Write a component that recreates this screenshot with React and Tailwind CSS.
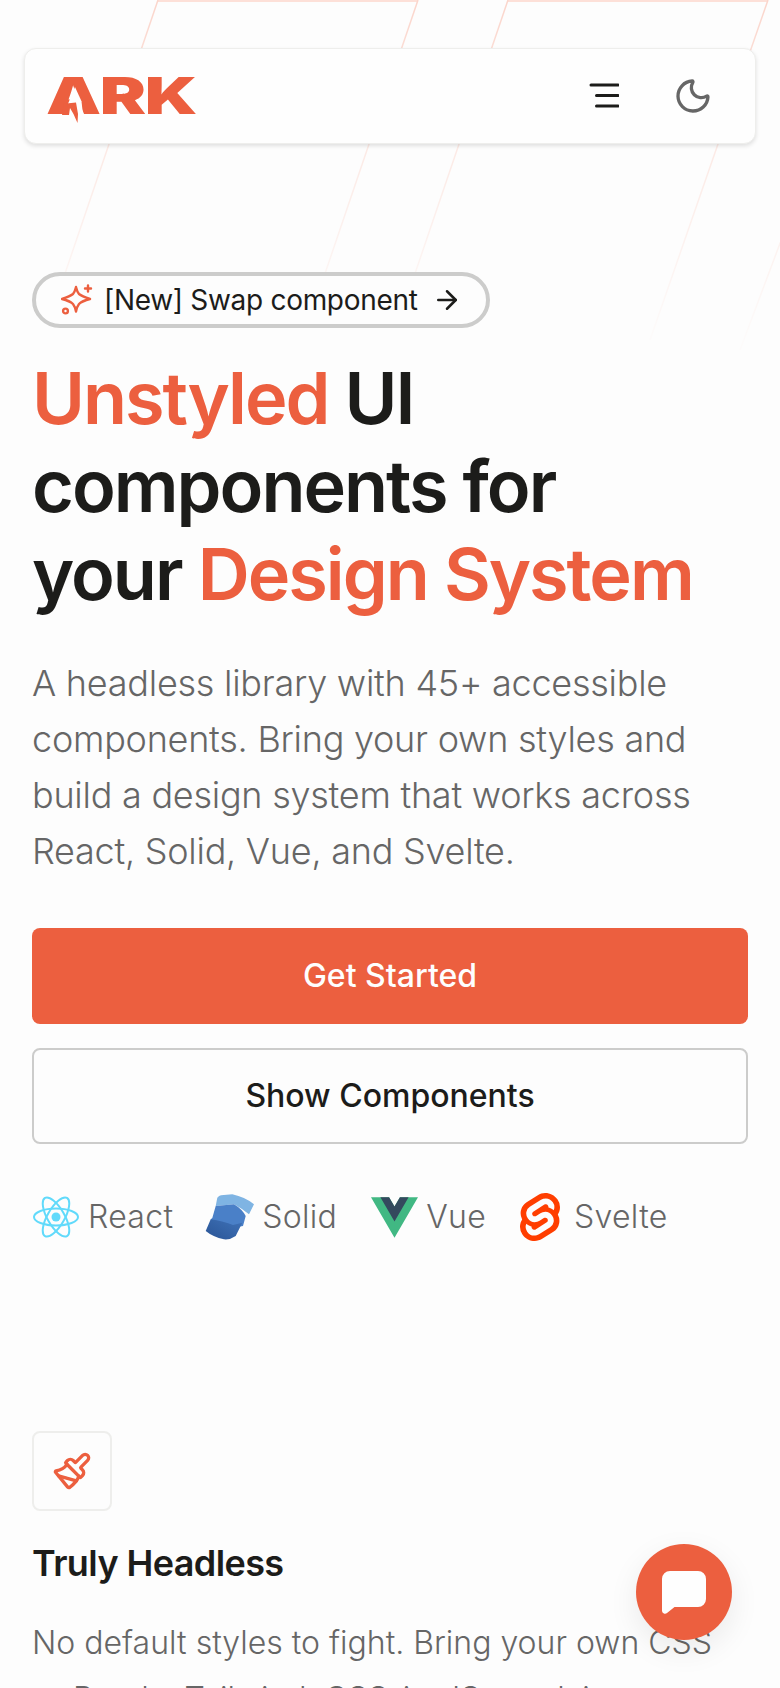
import { ArrowRight, Moon, Paintbrush } from "lucide-react";
import { SiSvelte } from "react-icons/si";

const font = { fontFamily: '"Inter", sans-serif' };

function BackgroundLines() {
  const lines = [
    [158, 0, 56, 300],
    [418, 0, 316, 300],
    [508, 0, 406, 300],
    [768, 0, 650, 340],
    [800, 190, 740, 350],
  ];
  return (
    <svg className="absolute top-0 left-0" width="780" height="360" viewBox="0 0 780 360" fill="none">
      <defs>
        <linearGradient id="fade" gradientUnits="userSpaceOnUse" x1="0" y1="0" x2="0" y2="340">
          <stop offset="0" stopColor="#fbd5cb" />
          <stop offset="0.4" stopColor="#fbd5cb" stopOpacity="0.5" />
          <stop offset="1" stopColor="#fbd5cb" stopOpacity="0.05" />
        </linearGradient>
      </defs>
      <rect x="158" y="0" width="260" height="2" fill="#fde0d8" />
      <rect x="508" y="0" width="260" height="2" fill="#fde0d8" />
      {lines.map(([x1, y1, x2, y2]) => (
        <path key={x1} d={`M${x1} ${y1}L${x2} ${y2}`} stroke="url(#fade)" strokeWidth="1.5" />
      ))}
    </svg>
  );
}

function Logo() {
  return (
    <div className="relative h-[46px] w-[146px]">
      <span className="absolute top-[-10px] left-0 origin-left scale-x-[1.36] text-[51px] leading-[60px] font-black tracking-[-1px] text-[#ec5f3f]">
        ARK
      </span>
      {/* bolt cut into the A */}
      <svg className="absolute top-[1px] left-[2px]" width="60" height="46" viewBox="0 0 60 46">
        <path d="M27 10 L33.500 24.300 L35 38 L20 38 L20 26.700 Z" fill="#fefefe" />
        <path d="M16 26.700 L28 25.500 L30 37 L29.500 46 L25.500 37 L22 31 L21 38 L14 38 Z" fill="#ec5f3f" />
      </svg>
    </div>
  );
}

function MenuIcon() {
  return (
    <svg width="30" height="26" viewBox="0 0 30 26" fill="none" stroke="#1c1c1a" strokeWidth="3" strokeLinecap="round">
      <path d="M2 2H29M7.500 12.500H29M7.500 23H29" />
    </svg>
  );
}

function SparkleIcon() {
  return (
    <svg width="32" height="32" viewBox="0 0 32 32" fill="none" stroke="#ec5f3f" strokeWidth="2.400" strokeLinecap="round" strokeLinejoin="round">
      <path d="M15 3c.5 2 1 4.500 3 7 2.500 2 5 3 11 5-6 1.500-8.500 2.500-11 5-2 2.500-2.500 5-3 7.500-.5-2.500-1-5-3-7.500-2.500-2.500-5-3.500-11-5 6-2 8.500-3 11-5 2-2.500 2.500-5 3-7Z" />
      <path d="M27 1.500v6M24 4.500h6" />
      <circle cx="4.500" cy="27" r="2.400" />
    </svg>
  );
}

function ReactIcon() {
  return (
    <svg width="48" height="44" viewBox="-24 -22 48 44" fill="none" stroke="#61dafb" strokeWidth="2">
      <circle r="4.500" fill="#61dafb" stroke="none" />
      <ellipse rx="22" ry="8.500" />
      <ellipse rx="22" ry="8.500" transform="rotate(60)" />
      <ellipse rx="22" ry="8.500" transform="rotate(120)" />
    </svg>
  );
}

function SolidIcon() {
  return (
    <svg width="49" height="46" viewBox="0 0 49 46">
      <defs>
        <linearGradient id="solidBottom" x1="0" y1="1" x2="1" y2="0">
          <stop offset="0" stopColor="#2a5596" />
          <stop offset="1" stopColor="#3f72b8" />
        </linearGradient>
      </defs>
      <path d="M12.300 3.700 Q14 1.500 16 1.300 L27.300 .3 Q40 3 49 10.300 L44 20.300 Q36 14 29 10.300 L10.700 12 Z" fill="#7fb4e3" />
      <path d="M10.700 12 L29 10.300 Q37 15 40.700 22 L38 32 L26 34 L12 34 L5.700 25.300 L7.300 24 Z" fill="#4a80c8" />
      <path d="M.7 37 L5.700 25.300 Q12 26 17 27.500 Q24 29 28 31 L37.300 28.700 L30.700 42 Q25 46 19 45.300 Q8 43 .7 37Z" fill="url(#solidBottom)" />
    </svg>
  );
}

function VueIcon() {
  return (
    <svg width="47" height="41" viewBox="0 0 261.76 226.69">
      <path d="M161.096.001l-30.225 52.351L100.647.001H-.005l130.877 226.688L261.749.001z" fill="#41b883" />
      <path d="M161.096.001l-30.225 52.351L100.647.001H52.346l78.526 136.01L209.398.001z" fill="#34495e" />
    </svg>
  );
}

function ChatIcon() {
  return (
    <svg width="46" height="44" viewBox="0 0 46 44" fill="#fefefe">
      <path d="M9 1h28a8 8 0 0 1 8 8v20a8 8 0 0 1-8 8H13.500L6 43a3 3 0 0 1-5-2V9a8 8 0 0 1 8-8Z" />
    </svg>
  );
}

function Framework({ icon, label, gapClass, className }) {
  return (
    <div className={`flex items-center ${gapClass} ${className}`}>
      {icon}
      <span className="text-[32px] leading-[48px] font-light tracking-[0.3px] text-[#666]">{label}</span>
    </div>
  );
}

export default function App() {
  return (
    <div style={font} className="relative h-[1688px] w-[780px] overflow-hidden bg-[#fdfdfd] text-[#1c1c1a]">
      <BackgroundLines />

      <nav className="relative mx-6 mt-12 flex h-[96px] items-center justify-between rounded-xl border border-[#eeeeec] bg-[#fefefe] pt-[6px] pr-[42px] pl-[21px] shadow-[0_2px_4px_rgba(0,0,0,0.12)]">
        <Logo />
        <div className="-mt-[6px] flex items-center gap-[54px]">
          <MenuIcon />
          <Moon size={40} strokeWidth={2} className="text-[#666]" />
        </div>
      </nav>

      <main className="relative px-8">
        <a className="mt-[128px] flex h-14 w-[458px] items-center rounded-full border-4 border-[#cccccb] bg-[#fdfdfd] pl-[25px] text-[28px] tracking-[-0.3px]">
          <SparkleIcon />
          <span className="ml-[11px]">[New] Swap component</span>
          <ArrowRight size={30} strokeWidth={2} className="ml-[14px]" />
        </a>

        <h1 className="mt-[26px] text-[72px] leading-[88px] font-semibold tracking-[-2px]">
          <span className="text-[#ec5f3f]">Unstyled</span> UI
          <br />
          components for
          <br />
          your <span className="text-[#ec5f3f]">Design System</span>
        </h1>

        <p className="mt-[37px] text-[36px] leading-[56px] font-light tracking-[-0.250px] text-[#666]">
          A headless library with 45+ accessible components. Bring your own styles and build a design system that works across React, Solid, Vue, and Svelte.
        </p>

        <div className="mt-[49px] flex flex-col gap-6">
          <button className="h-24 rounded-lg bg-[#ec5f3f] text-[32px] font-medium text-[#fefefe]">Get Started</button>
          <button className="h-24 rounded-lg border-2 border-[#cccccb] text-[32px] font-medium">Show Components</button>
        </div>

        <div className="mt-[49px] flex h-12 items-center">
          <Framework icon={<ReactIcon />} label="React" gapClass="gap-2" />
          <Framework icon={<SolidIcon />} label="Solid" gapClass="gap-2" className="ml-[32px]" />
          <Framework icon={<VueIcon />} label="Vue" gapClass="gap-2" className="ml-[34px]" />
          <Framework icon={<SiSvelte size={48} color="#ff3e00" />} label="Svelte" gapClass="gap-2.5" className="ml-[30px]" />
        </div>

        <div className="mt-[190px] flex h-20 w-20 items-center justify-center rounded-lg border-2 border-[#eeeeec] text-[#ec5f3f]">
          <Paintbrush size={40} strokeWidth={2} />
        </div>
        <h2 className="mt-[28px] text-[36px] leading-[48px] font-semibold tracking-[-0.600px]">Truly Headless</h2>
        <p className="mt-[28px] text-[32px] leading-[56px] font-light text-[#666]">
          No default styles to fight. Bring your own CSS — Panda, Tailwind, CSS-in-JS, or plain
        </p>
      </main>

      <button className="absolute top-[1544px] left-[636px] flex h-24 w-24 items-center justify-center rounded-full bg-[#ec5f3f] shadow-[0_10px_30px_rgba(0,0,0,0.08)]">
        <ChatIcon />
      </button>
    </div>
  );
}
